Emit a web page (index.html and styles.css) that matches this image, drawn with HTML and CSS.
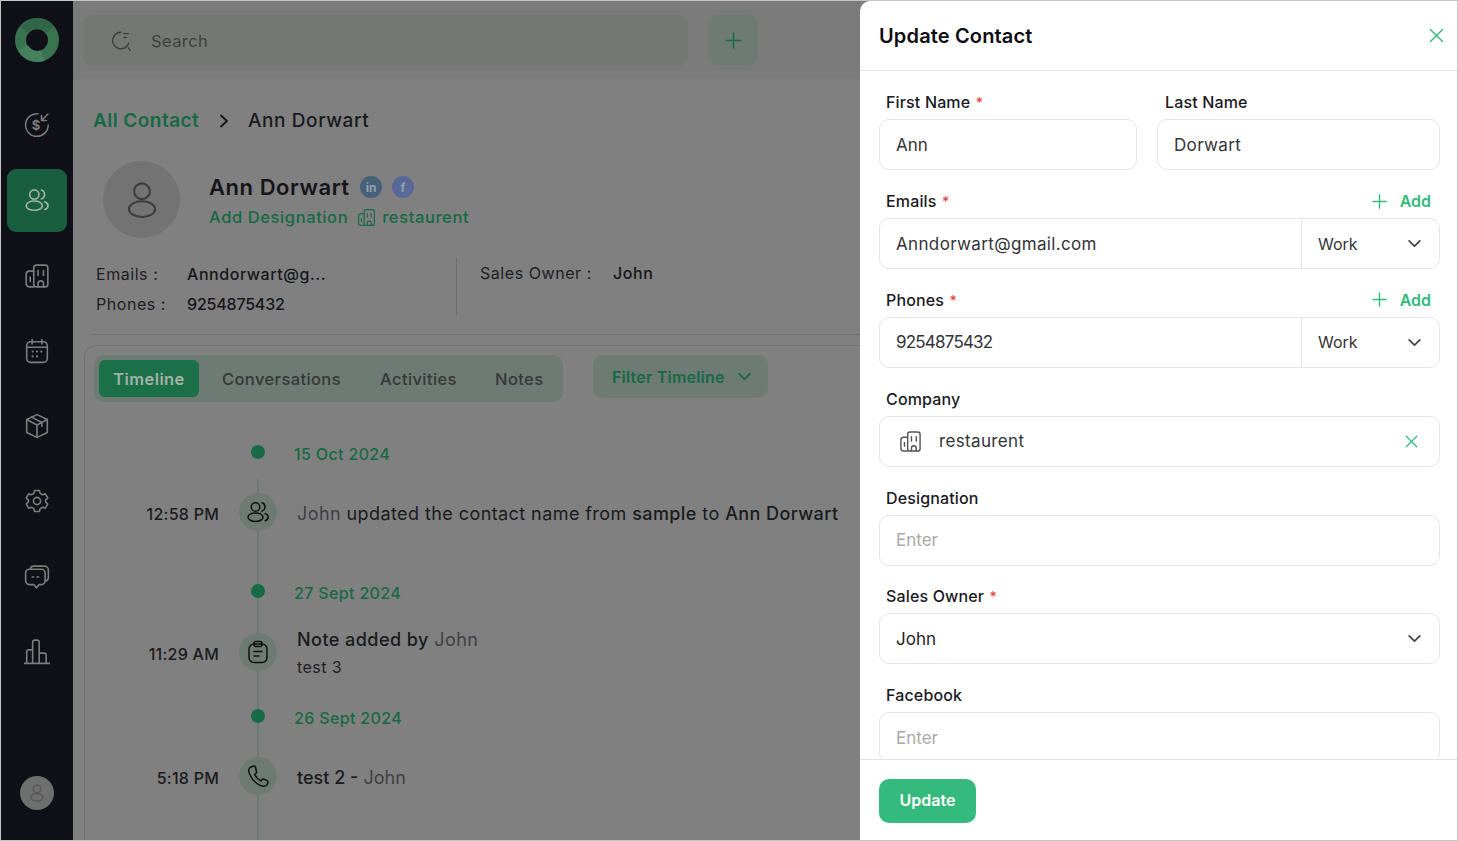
FILE: index.html
```html
<!DOCTYPE html>
<html lang="en">
<head>
<meta charset="utf-8">
<title>Update Contact</title>
<link rel="stylesheet" href="styles.css">
</head>
<body>
<svg class="defs" width="0" height="0" aria-hidden="true">
  <symbol id="i-users" viewBox="0 0 24 24"><circle cx="9.5" cy="7" r="4.3"/><ellipse cx="9.5" cy="17.2" rx="7.5" ry="4.3"/><path d="M16 2.8a4.3 4.3 0 0 1 0 8.2M19.2 13.6c1.8.8 3 2.1 3 3.6s-1.200 2.800-3 3.600"/></symbol>
  <symbol id="i-building" viewBox="0 0 24 24"><path d="M9 7.500H5a3 3 0 0 0-3 3V19a3 3 0 0 0 3 3h4"/><rect x="9" y="2" width="13" height="20" rx="2.500"/><path d="M5.700 13v4M13 7v4.500M18 7v4.500M13 22v-3a2.500 2.500 0 0 1 5 0v3"/></symbol>
  <symbol id="i-chev" viewBox="0 0 14 14"><path d="M2 4.500l5 5 5-5"/></symbol>
  <symbol id="i-x" viewBox="0 0 16 16"><path d="M1.500 1.500l13 13M14.500 1.500l-13 13"/></symbol>
  <symbol id="i-plus" viewBox="0 0 16 16"><path d="M8 1v14M1 8h14"/></symbol>
  <symbol id="i-person" viewBox="0 0 24 24"><circle cx="12" cy="7" r="4.500"/><ellipse cx="12" cy="17.200" rx="7.500" ry="4.500"/></symbol>
</svg>
<div class="frame">
  <aside class="sidebar">
    <svg class="logo" viewBox="0 0 44 44"><circle class="logo-a" cx="22" cy="22" r="16.500"/><path class="logo-b" d="M9 12A16.500 16.500 0 0 1 35 12"/><path class="logo-c" d="M8 30A16.500 16.500 0 0 0 28 37.500"/></svg>
    <nav class="nav">
      <a class="nav-item"><svg class="nav-ico" viewBox="0 0 26 26"><path d="M14 1.800A11.300 11.300 0 1 0 24.200 13"/><path d="M24 2l-6.500 6.500M17.500 3.500v5h5"/><text x="12" y="18" class="dollar">$</text></svg></a>
      <a class="nav-item active"><svg class="nav-ico"><use href="#i-users"/></svg></a>
      <a class="nav-item"><svg class="nav-ico"><use href="#i-building"/></svg></a>
      <a class="nav-item"><svg class="nav-ico" viewBox="0 0 24 24"><rect x="2.500" y="3.500" width="19" height="19" rx="3.500"/><path d="M7.500 1.500v4M16.500 1.500v4M2.500 8.500h19"/><path class="dots" d="M8 12.500h.01M12 12.500h.01M16 12.500h.01M8 17h.01M12 17h.01"/></svg></a>
      <a class="nav-item"><svg class="nav-ico" viewBox="0 0 24 24"><path d="M12 1.500l9.500 4.500v12L12 22.500 2.500 18V6z"/><path d="M2.500 6L12 11l9.500-5M12 11v11.500M7 3.800l9.500 5v3.500"/></svg></a>
      <a class="nav-item"><svg class="nav-ico" viewBox="0 0 24 24"><circle cx="12" cy="12" r="3.300"/><path d="M9.800 2.300h4.400l.7 2.700 2.100 1.200 2.700-.8 2.200 3.800-2 2v1.600l2 2-2.200 3.800-2.700-.8-2.100 1.200-.7 2.700H9.800l-.7-2.700L7 17.800l-2.700.8L2.100 14.800l2-2v-1.600l-2-2 2.200-3.800 2.700.8 2.100-1.200z"/></svg></a>
      <a class="nav-item"><svg class="nav-ico" viewBox="0 0 24 24"><path d="M6 4.500A3 3 0 0 1 9 2h10a3.500 3.500 0 0 1 3.500 3.500v7a3.500 3.500 0 0 1-3 3.400"/><path d="M5 4.800h11a3.500 3.500 0 0 1 3.500 3.500v7.200a3.500 3.500 0 0 1-3.500 3.500h-2l-2.500 3-2.500-3H5a3.500 3.500 0 0 1-3.500-3.500V8.300A3.500 3.500 0 0 1 5 4.800z"/><path d="M7.500 12h1.500M12 12h1.500"/></svg></a>
      <a class="nav-item"><svg class="nav-ico" viewBox="0 0 24 24"><path d="M0 22.500h24M2.500 22.500V11.500a1.500 1.500 0 0 1 1.500-1.500h4v12.500M8 22.500V3a2 2 0 0 1 2-2h2a2 2 0 0 1 2 2v19.500M14 13h4.500a2 2 0 0 1 2 2v7.500"/></svg></a>
    </nav>
    <div class="me"><svg class="me-ico"><use href="#i-person"/></svg></div>
  </aside>

  <main class="main">
    <header class="topbar">
      <div class="search">
        <svg class="search-ico" viewBox="0 0 24 24"><path d="M12 2.500A9 9 0 1 0 20.500 14"/><path d="M15 4h5M15 8h3M20 19.500l2 2.500"/></svg>
        <span>Search</span>
      </div>
      <button class="add-btn"><svg class="plus-lg"><use href="#i-plus"/></svg></button>
    </header>

    <div class="crumbs">
      <a class="crumb-link">All Contact</a>
      <svg class="crumb-sep" viewBox="0 0 10 14"><path d="M2 1.500l6 5.500-6 5.500"/></svg>
      <span class="crumb-now">Ann Dorwart</span>
    </div>

    <section class="profile">
      <div class="avatar"><svg class="avatar-ico"><use href="#i-person"/></svg></div>
      <div class="profile-text">
        <div class="name-row">
          <h1 class="name">Ann Dorwart</h1>
          <span class="social in">in</span>
          <span class="social fb">f</span>
        </div>
        <div class="sub-row">
          <a class="sub-link">Add Designation</a>
          <svg class="sub-ico"><use href="#i-building"/></svg>
          <a class="sub-link">restaurent</a>
        </div>
      </div>
    </section>

    <section class="details">
      <dl class="detail-col first">
        <div class="detail"><dt>Emails :</dt><dd>Anndorwart@g...</dd></div>
        <div class="detail"><dt>Phones :</dt><dd class="digits">9254875432</dd></div>
      </dl>
      <dl class="detail-col second">
        <div class="detail owner"><dt>Sales Owner :</dt><dd>John</dd></div>
      </dl>
    </section>

    <section class="card">
      <div class="toolbar">
        <div class="tabs">
          <span class="tab on">Timeline</span>
          <span class="tab t2">Conversations</span>
          <span class="tab t3">Activities</span>
          <span class="tab t4">Notes</span>
        </div>
        <button class="filter">Filter Timeline <svg class="filter-chev"><use href="#i-chev"/></svg></button>
      </div>

      <div class="timeline">
        <div class="tl-date d1"><i class="dot"></i><span>15 Oct 2024</span></div>
        <div class="tl-row r1"><time>12:58 PM</time><span class="tl-ico"><svg><use href="#i-users"/></svg></span><p><em>John</em> updated the contact name from <b>sample</b> to <b>Ann Dorwart</b></p></div>
        <div class="tl-date d2"><i class="dot"></i><span>27 Sept 2024</span></div>
        <div class="tl-row r2"><time>11:29 AM</time><span class="tl-ico"><svg viewBox="0 0 24 24"><rect x="3" y="4" width="18" height="18.500" rx="5"/><rect x="8" y="1.500" width="8" height="5" rx="2"/><path d="M8 11.500h8M8 16h5"/></svg></span><div class="tl-body"><p><b>Note added by</b> <em>John</em></p><small>test 3</small></div></div>
        <div class="tl-date d3"><i class="dot"></i><span>26 Sept 2024</span></div>
        <div class="tl-row r3"><time>5:18 PM</time><span class="tl-ico"><svg viewBox="0 0 24 24"><path d="M7.500 2L4 3.500C2.500 5 2.500 8 4 11c2 4.500 6 8.500 10.500 10.500 2.500 1 5 1 6.500-.5l1-2.500c.2-.8-.2-1.400-1-1.800l-3-1.500c-.7-.3-1.400-.2-1.900.4l-1.100 1.300c-2.800-1.300-5-3.600-6.300-6.400l1.300-1.100c.6-.5.7-1.200.4-1.900L9.500 3C9.100 2.200 8.300 1.800 7.500 2z"/></svg></span><p><b>test 2 -</b> <em>John</em></p></div>
      </div>
    </section>
  </main>

  <aside class="drawer">
    <header class="drawer-head">
      <h2>Update Contact</h2>
      <svg class="close"><use href="#i-x"/></svg>
    </header>
    <form class="form">
      <div class="pair">
        <div class="field"><div class="label"><label>First Name <i>*</i></label></div><div class="input">Ann</div></div>
        <div class="field"><div class="label last"><label>Last Name</label></div><div class="input wide">Dorwart</div></div>
      </div>
      <div class="field"><div class="label"><label>Emails <i>*</i></label><span class="add"><svg class="plus"><use href="#i-plus"/></svg>Add</span></div>
        <div class="input split"><span class="grow wide">Anndorwart@gmail.com</span><span class="type">Work<svg class="chev"><use href="#i-chev"/></svg></span></div></div>
      <div class="field"><div class="label"><label>Phones <i>*</i></label><span class="add"><svg class="plus"><use href="#i-plus"/></svg>Add</span></div>
        <div class="input split"><span class="grow tight">9254875432</span><span class="type">Work<svg class="chev"><use href="#i-chev"/></svg></span></div></div>
      <div class="field"><div class="label"><label>Company</label></div>
        <div class="input company"><svg class="co-ico"><use href="#i-building"/></svg><span class="grow wide">restaurent</span><svg class="co-x"><use href="#i-x"/></svg></div></div>
      <div class="field"><div class="label"><label>Designation</label></div><div class="input ph">Enter</div></div>
      <div class="field"><div class="label"><label>Sales Owner <i>*</i></label></div>
        <div class="input select"><span class="grow">John</span><svg class="chev"><use href="#i-chev"/></svg></div></div>
      <div class="field"><div class="label"><label>Facebook</label></div><div class="input ph">Enter</div></div>
    </form>
    <footer class="drawer-foot"><button class="update" type="button">Update</button></footer>
  </aside>
</div>
</body>
</html>
```
FILE: styles.css
```css
* { box-sizing: border-box; margin: 0; padding: 0; }
html, body { width: 1458px; height: 841px; overflow: hidden; }
body { font-family: Inter, "Noto Sans", sans-serif; color: #1b1b20; background: #808080; }
.defs { position: absolute; }
svg { fill: none; stroke: currentColor; stroke-width: 1.5; stroke-linecap: round; stroke-linejoin: round; display: block; }
a { display: inline-block; }
em { font-style: normal; }
b { font-weight: 500; }

.frame { position: relative; width: 1458px; height: 841px; border: 1px solid #c6c6c6; display: flex; overflow: hidden; background: #808080; }

/* sidebar */
.sidebar { width: 72px; flex: none; background: #101118; display: flex; flex-direction: column; align-items: center; color: #7c7c7c; }
.logo { width: 44px; height: 44px; margin-top: 17px; stroke-linecap: butt; }
.logo circle, .logo path { stroke-width: 11; }
.logo-a { stroke: #3a7350; }
.logo-b { stroke: #326648; }
.logo-c { stroke: #47805d; }
.nav { margin-top: 31.500px; display: flex; flex-direction: column; gap: 12.300px; }
.nav-item { width: 60px; height: 63px; border-radius: 9px; display: flex; align-items: center; justify-content: center; }
.nav-item.active { background: #185e3f; color: #9fb2a7; }
.nav-ico { width: 26px; height: 26px; }
.dollar { font: 700 13px Inter, sans-serif; fill: currentColor; stroke: none; text-anchor: middle; }
.dots { stroke-width: 2; }
.me { margin-top: auto; margin-bottom: 30px; width: 34px; height: 34px; border-radius: 50%; background: #6f6f6f; display: flex; align-items: center; justify-content: center; color: #555; }
.me-ico { width: 20px; height: 20px; }

/* main */
.main { width: 787px; flex: none; padding: 0; background: #808080; }
.topbar { height: 78px; background: #7b7b7b; padding: 14px 0 0 10px; display: flex; gap: 20px; align-items: flex-start; }
.search { width: 605px; height: 51px; border-radius: 10px; background: #757775; display: flex; align-items: center; gap: 19px; padding-left: 27px; font-size: 16.500px; letter-spacing: .4px; color: #404040; }
.search-ico { width: 22px; height: 22px; color: #3d3d3d; }
.add-btn { width: 50px; height: 50px; border: 0; border-radius: 10px; background: #6e7a74; color: #186e49; display: flex; align-items: center; justify-content: center; }
.plus-lg { width: 17px; height: 17px; }

.crumbs { display: flex; align-items: center; padding: 29px 0 0 20px; height: 54px; font-size: 19px; font-weight: 500; line-height: 24px; letter-spacing: .6px; }
.crumb-link { color: #166a45; width: 106px; font-weight: 600; letter-spacing: .45px; white-space: nowrap; }
.crumb-sep { width: 10px; height: 14px; margin: 0 19px 0 20px; color: #111; stroke-width: 1.800; }
.crumb-now { color: #1a1a1f; }

.profile { display: flex; padding: 28px 0 0 30px; height: 125px; }
.avatar { width: 77px; height: 77px; border-radius: 50%; background: #737373; display: flex; align-items: center; justify-content: center; color: #3d3d3d; }
.avatar-ico { width: 42px; height: 42px; stroke-width: 1.200; }
.profile-text { margin-left: 29px; }
.name-row { display: flex; align-items: center; height: 26px; margin-top: 13px; }
.name { font-size: 22px; font-weight: 600; color: #15151a; width: 151px; line-height: 26px; letter-spacing: .55px; white-space: nowrap; }
.social { width: 22px; height: 22px; border-radius: 50%; display: flex; align-items: center; justify-content: center; font-size: 12px; font-weight: 700; color: #93a1ae; }
.social.in { background: #47617a; margin-right: 10px; }
.social.fb { background: #586897; }
.sub-row { display: flex; align-items: center; margin-top: 7px; height: 20px; font-size: 16.500px; font-weight: 500; color: #166a45; letter-spacing: .6px; }
.sub-link { white-space: nowrap; }
.sub-ico { width: 19px; height: 19px; margin: 0 6px 0 9px; }

.details { display: flex; margin: 0 0 0 20px; height: 77px; border-bottom: 1px solid #6f6f6f; padding-bottom: 19px; }
.detail-col { display: flex; flex-direction: column; gap: 11px; }
.detail-col.first { width: 364px; border-right: 1px solid #6e6e6e; padding: 7px 0 0 3px; }
.detail-col.second { padding: 6px 0 0 23px; }
.detail { display: flex; font-size: 16px; line-height: 19px; letter-spacing: .55px; }
.detail dt { width: 91px; color: #202024; }
.detail dd { color: #17171c; font-weight: 500; }
.detail .digits { letter-spacing: -.2px; }
.owner dt { width: 133px; }

.card { margin: 10px 0 0 11px; height: 600px; border: 1px solid #727272; border-right: 0; border-radius: 12px 0 0 0; padding: 9px 0 0 9px; position: relative; }
.toolbar { display: flex; align-items: flex-start; gap: 30px; }
.tabs { width: 469px; height: 47px; background: #6e7a74; border-radius: 10px; display: flex; align-items: center; padding-left: 5px; font-size: 16.500px; font-weight: 500; color: #38383a; white-space: nowrap; letter-spacing: .4px; }
.tab { display: block; }
.tab.on { width: 100px; height: 37px; background: #1b7049; color: #a0b3a8; border-radius: 6px; display: flex; align-items: center; justify-content: center; font-weight: 600; }
.t2 { margin-left: 23px; width: 119px; }
.t3 { margin-left: 39px; width: 77px; }
.t4 { margin-left: 38px; }
.filter { width: 175px; height: 43px; border: 0; border-radius: 10px; background: #6e7a74; color: #166a45; font: 600 16px Inter, sans-serif; letter-spacing: .2px; display: flex; align-items: center; padding: 0 0 0 19px; white-space: nowrap; }
.filter-chev { width: 15px; height: 15px; margin-left: 12px; stroke-width: 1.800; }

.timeline { position: relative; height: 440px; }
.timeline::before { content: ""; position: absolute; left: 163px; top: 36px; bottom: -30px; width: 2px; background: #6e7a74; }
.tl-date { position: relative; display: flex; align-items: center; font-size: 16px; font-weight: 500; color: #166a45; height: 20px; padding: 2px 0 0 200px; letter-spacing: .35px; }
.dot { position: absolute; left: 157px; top: 2px; width: 14px; height: 14px; border-radius: 50%; background: #176c47; }
.d1 { margin-top: 41px; }
.d2 { margin-top: 50px; }
.d3 { margin-top: 35px; }
.tl-row { position: relative; display: flex; align-items: center; height: 40px; font-size: 18px; color: #1b1b20; white-space: nowrap; letter-spacing: .42px; }
.r1 { margin-top: 29px; }
.r2 { margin-top: 30px; }
.r3 { margin-top: 29px; letter-spacing: 0; }
.tl-row time { width: 125px; text-align: right; font-size: 16px; font-weight: 500; padding-top: 4px; letter-spacing: .25px; }
.tl-ico { width: 38px; height: 38px; border-radius: 50%; background: #6e7a74; margin-left: 20px; display: flex; align-items: center; justify-content: center; }
.tl-ico svg { width: 24px; height: 24px; color: #111; }
.tl-row > p { margin-left: 20px; padding-top: 2px; }
.tl-body { margin-left: 20px; padding-top: 2px; letter-spacing: .45px; }
.tl-row em { color: #404044; }
.tl-body small { display: block; font-size: 16px; margin-top: 6px; color: #222; }
.tl-body p { line-height: 22px; }

/* drawer */
.drawer { position: absolute; left: 859px; top: 0; right: 0; bottom: 0; background: #fff; border-radius: 10px 0 0 10px; display: flex; flex-direction: column; }
.drawer-head { height: 70px; flex: none; border-bottom: 1px solid #e4e4e4; display: flex; align-items: center; justify-content: space-between; padding: 0 13px 0 19px; }
.drawer-head h2 { font-size: 20px; font-weight: 600; color: #0d0d12; letter-spacing: .15px; }
.close { width: 15px; height: 15px; color: #33ba7c; }
.form { flex: 1; overflow: hidden; padding: 20.400px 17px 0 19px; display: flex; flex-direction: column; gap: 19.800px; }
.pair { display: grid; grid-template-columns: 258px 283px; gap: 20px; }
.label { display: flex; justify-content: space-between; align-items: center; height: 20px; margin-bottom: 8px; padding: 2px 9px 0 7px; font-size: 16px; font-weight: 500; color: #1a1a1f; letter-spacing: .15px; }
.label.last { padding-left: 8px; }
.label i { color: #ef4444; font-style: normal; font-size: 14px; margin-left: 1px; }
.add { display: flex; align-items: center; color: #33ba7c; font-weight: 600; font-size: 16px; letter-spacing: 0; }
.plus { width: 15px; height: 15px; margin-right: 13px; }
.input { height: 51px; flex: none; border: 1px solid #e6e6e6; border-radius: 10px; display: flex; align-items: center; padding: 0 16px; font-size: 17px; color: #333338; }
.wide { letter-spacing: .35px; }
.tight { letter-spacing: -.8px; }
.grow { flex: 1; }
.split { padding-right: 0; }
.type { width: 138px; height: 100%; border-left: 1px solid #e6e6e6; display: flex; align-items: center; justify-content: space-between; padding: 0 17px 0 16px; font-size: 16px; }
.chev { width: 15px; height: 15px; color: #444; stroke-width: 1.600; }
.company { padding-right: 21px; }
.co-ico { width: 23px; height: 23px; color: #555; margin: 0 17px 0 3px; }
.co-x { width: 13px; height: 13px; color: #33ba7c; }
.select { padding-right: 17px; color: #222; }
.ph { color: #aaa; }
.drawer-foot { height: 81px; flex: none; border-top: 1px solid #e4e4e4; padding: 19px 19px 0; background: #fff; }
.update { width: 97px; height: 44px; border: 0; border-radius: 10px; padding-bottom: 2px; background: #33ba7c; color: #fff; font: 600 16px Inter, sans-serif; }
```
